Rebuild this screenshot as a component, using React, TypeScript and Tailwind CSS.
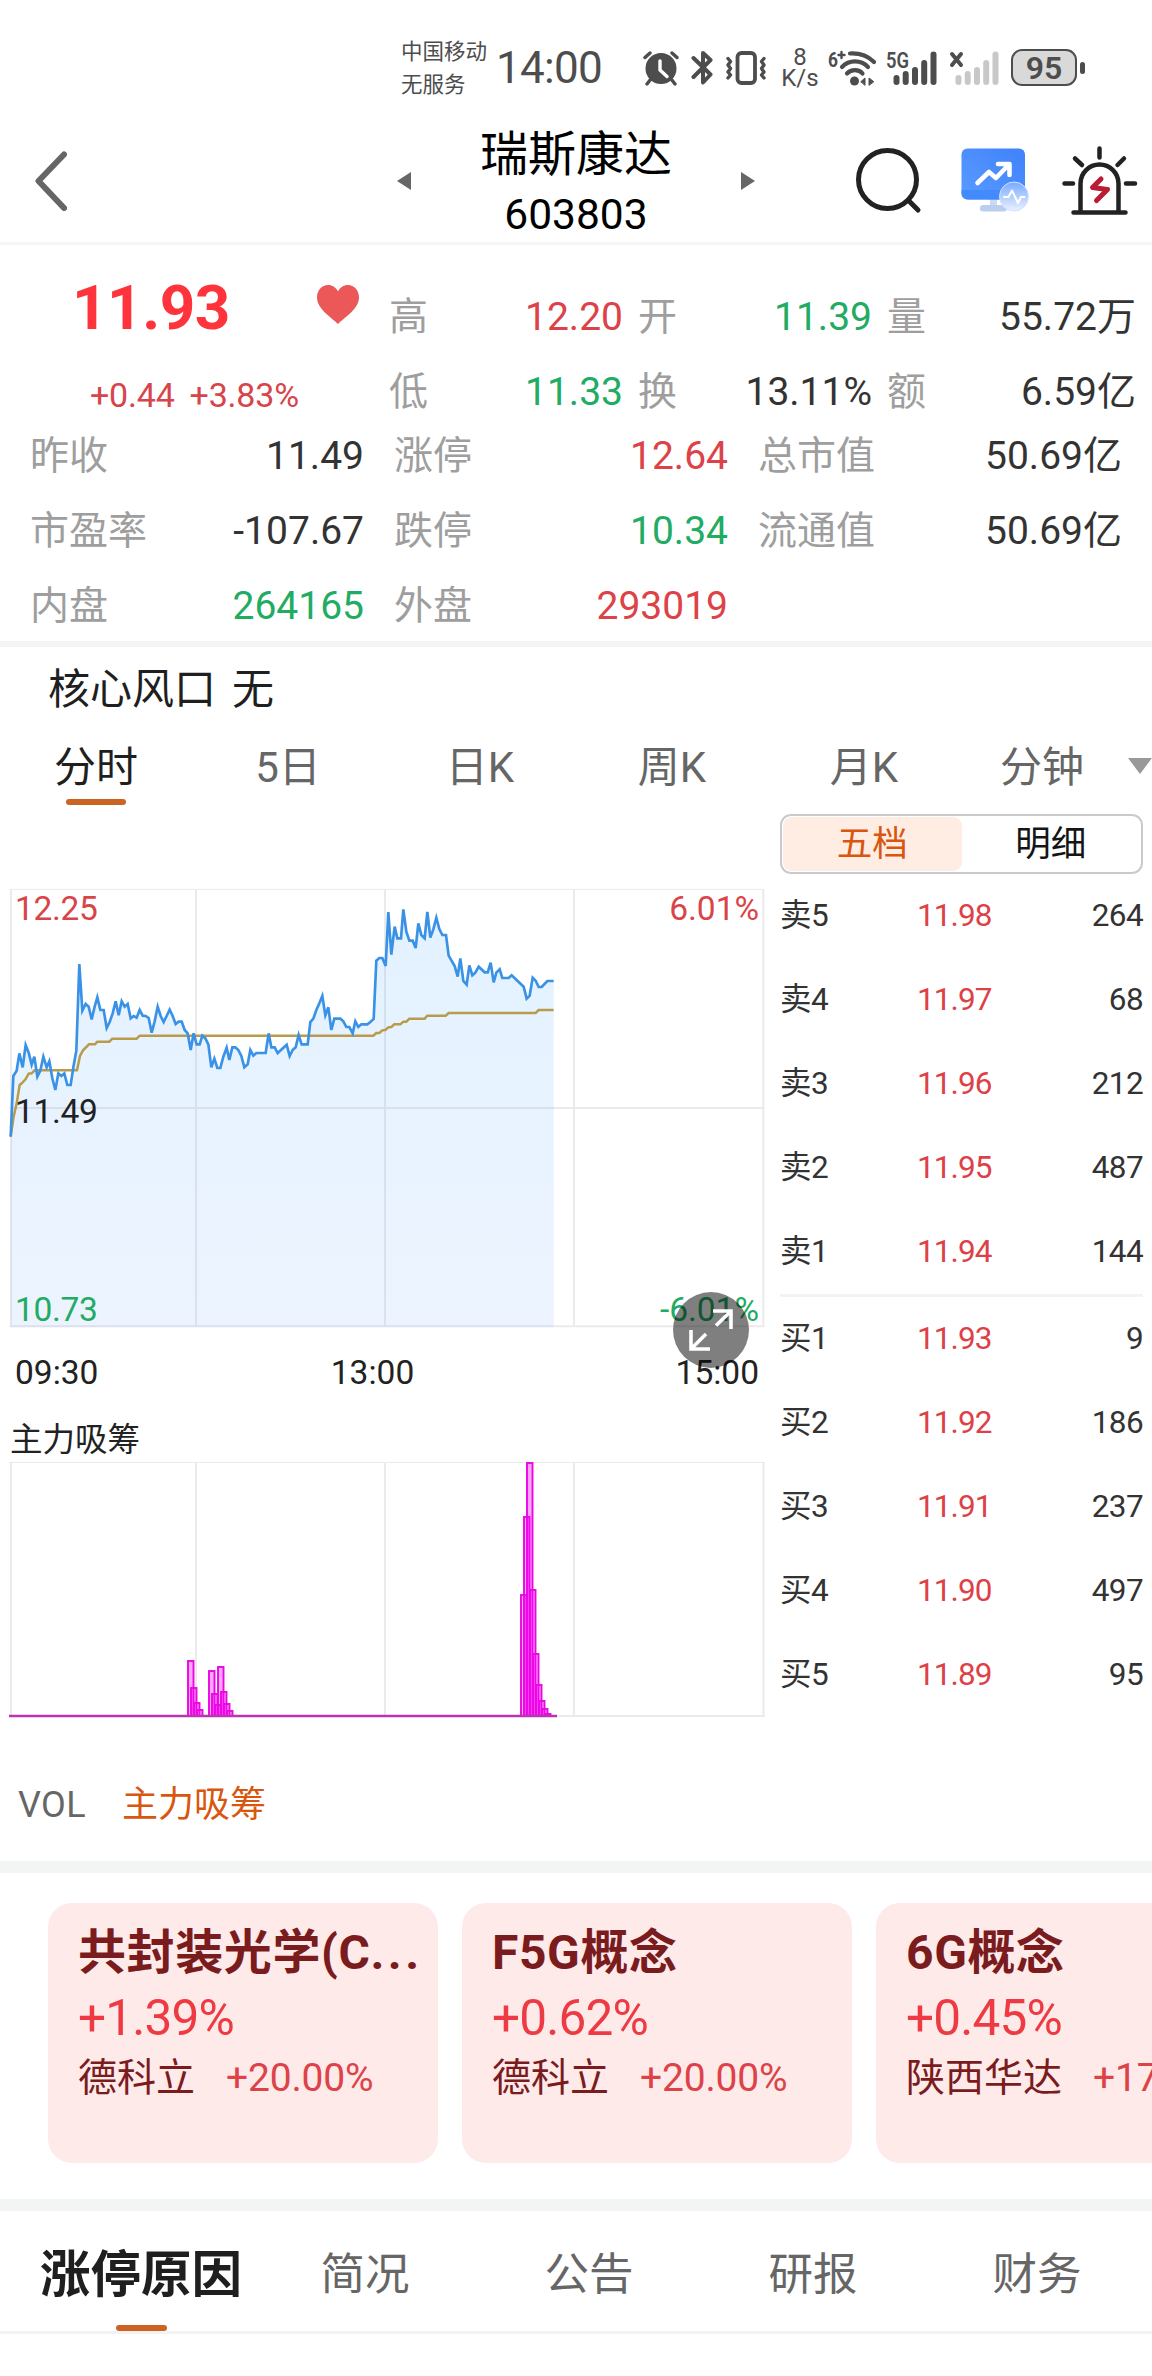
import clsx from "clsx"

type Tone = "up" | "down" | "flat"

interface Quote {
  label: string
  value: string
  tone: Tone
}

const toneClass: Record<Tone, string> = {
  up: "text-[#dc4248]",
  down: "text-[#22ab63]",
  flat: "text-[#333333]",
}

const topQuotes: Quote[] = [
  { label: "高", value: "12.20", tone: "up" },
  { label: "开", value: "11.39", tone: "down" },
  { label: "量", value: "55.72万", tone: "flat" },
  { label: "低", value: "11.33", tone: "down" },
  { label: "换", value: "13.11%", tone: "flat" },
  { label: "额", value: "6.59亿", tone: "flat" },
]

const moreQuotes: Quote[] = [
  { label: "昨收", value: "11.49", tone: "flat" },
  { label: "涨停", value: "12.64", tone: "up" },
  { label: "总市值", value: "50.69亿", tone: "flat" },
  { label: "市盈率", value: "-107.67", tone: "flat" },
  { label: "跌停", value: "10.34", tone: "down" },
  { label: "流通值", value: "50.69亿", tone: "flat" },
  { label: "内盘", value: "264165", tone: "down" },
  { label: "外盘", value: "293019", tone: "up" },
]

const periods = ["分时", "5日", "日K", "周K", "月K", "分钟"]

const asks = [
  ["卖5", "11.98", "264"],
  ["卖4", "11.97", "68"],
  ["卖3", "11.96", "212"],
  ["卖2", "11.95", "487"],
  ["卖1", "11.94", "144"],
]

const bids = [
  ["买1", "11.93", "9"],
  ["买2", "11.92", "186"],
  ["买3", "11.91", "237"],
  ["买4", "11.90", "497"],
  ["买5", "11.89", "95"],
]

const concepts = [
  { name: "共封装光学(C", clipped: true, change: "+1.39%", leader: "德科立", leaderChange: "+20.00%" },
  { name: "F5G概念", clipped: false, change: "+0.62%", leader: "德科立", leaderChange: "+20.00%" },
  { name: "6G概念", clipped: false, change: "+0.45%", leader: "陕西华达", leaderChange: "+17" },
]

const sections = ["涨停原因", "简况", "公告", "研报", "财务"]

// Chart series are kept in thirds of a pixel.
const priceLine =
  "32,830 40,648 50,632 58,580 68,622 77,555 86,578 95,614 103,590 112,650 121,632 130,590 140,622 148,604 157,655 166,690 175,640 184,648 193,640 202,675 212,675 220,622 229,572 238,312 247,452 257,432 266,440 275,478 284,440 292,412 301,450 311,450 320,504 329,486 338,460 347,424 356,466 365,424 374,440 383,432 392,475 401,468 410,473 419,450 428,467 437,468 446,474 455,518 464,484 473,440 482,468 491,486 500,468 509,449 518,468 527,492 536,485 545,485 554,510 563,520 572,570 581,520 590,553 599,553 607,527 616,535 625,553 634,622 643,596 652,624 661,624 670,590 680,563 688,600 697,562 706,562 715,570 724,588 733,622 743,613 751,570 760,587 769,579 797,579 806,520 814,562 824,562 833,579 860,554 869,588 878,570 887,562 896,525 905,553 923,553 931,486 940,476 949,450 958,430 967,408 976,466 985,442 994,510 1003,476 1021,476 1030,484 1039,501 1048,501 1058,520 1066,484 1075,501 1084,493 1102,493 1111,486 1121,477 1129,302 1138,294 1147,294 1157,318 1165,156 1174,284 1184,200 1192,235 1203,235 1210,148 1219,215 1228,242 1238,242 1247,264 1255,190 1264,225 1274,235 1282,156 1291,233 1300,208 1309,173 1318,207 1327,225 1338,225 1346,287 1364,318 1373,350 1381,295 1390,363 1400,374 1408,316 1417,346 1426,338 1436,320 1454,337 1463,337 1472,308 1481,367 1489,338 1499,328 1507,354 1526,354 1535,346 1553,363 1571,380 1580,416 1589,407 1598,353 1607,362 1616,381 1625,381 1642,363 1661,363"

const averageLine =
  "32,830 41,770 50,730 59,675 68,667 77,657 86,641 95,640 104,631 231,631 240,588 249,571 267,553 285,553 292,545 328,545 337,536 410,536 419,527 1120,527 1129,519 1138,519 1147,511 1156,510 1165,502 1174,501 1183,493 1201,493 1210,485 1219,485 1228,476 1274,476 1282,467 1337,467 1346,459 1607,459 1616,450 1661,450"

// [left, height] of each accumulation bar
const bars = [
  [188, 55], [191, 28], [194, 13], [197, 6],
  [209, 45], [212, 22], [215, 11], [218, 49], [221, 24], [224, 12], [227, 5],
  [521, 121], [524, 199], [527, 253], [530, 126], [533, 62], [536, 31], [539, 15], [542, 7], [545, 2],
]

function Signal({ className }: { className: string }) {
  return (
    <g className={className}>
      <rect x="0" y="24" width="6" height="10" rx="3" />
      <rect x="9.2" y="20" width="6" height="14" rx="3" />
      <rect x="18.5" y="16" width="6" height="18" rx="3" />
      <rect x="27.7" y="9" width="6" height="25" rx="3" />
      <rect x="37" y="0.5" width="6" height="33.5" rx="3" />
    </g>
  )
}

function StatusBar() {
  return (
    <div className="flex h-[120px] items-center pt-[15px] pl-[401px] text-[#4d4d4d]">
      <div className="w-[90px] text-[21.5px] leading-[33px] whitespace-nowrap">
        <div>中国移动</div>
        <div>无服务</div>
      </div>
      <div className="w-[152px] pl-[5px] text-[44px] leading-none tracking-[-0.7px]">14:00</div>
      {/* alarm */}
      <svg className="w-9 flex-none" height="36" viewBox="0 0 36 36" fill="none" stroke="currentColor">
        <circle cx="18" cy="18.5" r="15.5" fill="currentColor" stroke="none" />
        <path d="M2 7.5 7 3M34 7.5 29 3M7.5 29.5 4 34M28.5 29.5 32 34" strokeWidth="3.4" strokeLinecap="round" />
        <path d="M17 11v9l7 6.5" stroke="#fff" strokeWidth="3.4" strokeLinecap="round" strokeLinejoin="round" />
      </svg>
      {/* bluetooth */}
      <svg className="ml-3 w-[22px] flex-none" height="36" viewBox="0 0 22 36" fill="none" stroke="currentColor" strokeWidth="4" strokeLinecap="round" strokeLinejoin="round">
        <path d="M2.5 8 19.5 24.5 12 32.5V3L19.5 10 2.5 27" />
      </svg>
      {/* vibrate */}
      <svg className="ml-3 w-[42px] flex-none" height="36" viewBox="0 0 42 36" fill="none" stroke="currentColor" strokeLinecap="round" strokeLinejoin="round">
        <rect x="12.5" y="3" width="17.5" height="30" rx="4" strokeWidth="3.8" />
        <path d="M3 8.5 5.5 11.5 3 15 5.5 18.5 3 22 5.5 25 3 28M39 8.5 36.5 11.5 39 15 36.5 18.5 39 22 36.5 25 39 28" strokeWidth="3.4" />
      </svg>
      <div className="ml-[14px] w-[38px] text-center text-[24px] leading-[21px]">
        <div>8</div>
        <div>K/s</div>
      </div>
      {/* wifi 6+ */}
      <svg className="ml-[9px] w-[50px] flex-none overflow-visible" height="36" viewBox="0 0 50 36" fill="none" stroke="currentColor" strokeWidth="4.2" strokeLinecap="round">
        <text x="0" y="17" fontSize="21" fontWeight="700" fill="currentColor" stroke="none" textLength="10" lengthAdjust="spacingAndGlyphs">6</text>
        <path d="M10.5 5h6M13.5 2v6" strokeWidth="2.4" />
        <path d="M22 3.5C32 3 40 6 46 12M14 17C21 9.5 33 9.5 40 17M19 23.5C23 19 31 19 34.5 23.5" />
        <circle cx="26.5" cy="31" r="4.5" fill="currentColor" stroke="none" />
        <path d="M33 31.500 37 28v7zM41 35v-7l4.500 3.500z" fill="currentColor" strokeWidth="1" />
      </svg>
      {/* 5G signal */}
      <svg className="ml-2 w-[52px] flex-none overflow-visible" height="36" viewBox="0 0 52 36" fill="currentColor">
        <text x="0" y="17.5" fontSize="22" fontWeight="600" textLength="23" lengthAdjust="spacingAndGlyphs">5G</text>
        <g transform="translate(7.5 1)">
          <Signal className="fill-[#4d4d4d]" />
        </g>
      </svg>
      {/* second sim, no service */}
      <svg className="ml-[10px] w-[52px] flex-none" height="36" viewBox="0 0 52 36">
        <path d="M4 4l9 11M13 4 4 15" stroke="#4d4d4d" strokeWidth="4" strokeLinecap="round" />
        <g transform="translate(7.5 1)">
          <Signal className="fill-[#c8c8c8]" />
        </g>
      </svg>
      <div className="ml-[11px] flex items-center gap-[3px]">
        <div className="flex h-[37px] w-[66px] items-center justify-center rounded-[11px] border-[2.5px] border-[#4d4d4d] bg-[#d9d9d9] text-[32px] leading-none font-semibold">
          95
        </div>
        <div className="h-3 w-[5px] rounded-full bg-[#4d4d4d]" />
      </div>
    </div>
  )
}

function Header() {
  return (
    <header className="flex h-[125px] items-center border-b-[3px] border-[#f4f5f5] pl-[35px]">
      <svg className="w-8 flex-none" height="60" viewBox="0 0 32 60" fill="none" stroke="#666" strokeWidth="6" strokeLinecap="round" strokeLinejoin="round">
        <path d="M29 3.500 3.500 30 29 57" />
      </svg>
      <svg className="ml-[330px] w-[14px] flex-none" height="18" viewBox="0 0 14 18" fill="#666">
        <path d="M14 0v18L0 9z" />
      </svg>
      <div className="h-[122px] w-[330px] flex-none text-center text-black">
        <h1 className="h-16 text-[48px] leading-[69px]">瑞斯康达</h1>
        <div className="h-[58px] text-[42.5px] leading-[62px]">603803</div>
      </div>
      <svg className="w-[14px] flex-none" height="18" viewBox="0 0 14 18" fill="#666">
        <path d="M0 0v18l14-9z" />
      </svg>
      <svg className="ml-[101px] w-[66px] flex-none" height="66" viewBox="0 0 66 66" fill="none" stroke="#222" strokeWidth="5">
        <circle cx="31.5" cy="31.5" r="29" />
        <path d="M53 53l9 9" strokeLinecap="round" />
      </svg>
      <svg className="ml-[39px] w-[70px] flex-none" height="66" viewBox="0 0 70 66">
        <defs>
          <linearGradient id="screen" x1="0" y1="1" x2="1" y2="0">
            <stop offset="0" stopColor="#5a9bff" />
            <stop offset="1" stopColor="#3f82fb" />
          </linearGradient>
          <linearGradient id="badge" x1="0" y1="0" x2="0" y2="1">
            <stop offset="0" stopColor="#78aaff" />
            <stop offset="1" stopColor="#eaf2ff" />
          </linearGradient>
        </defs>
        <path d="M29 50h7v10h-7z" fill="#c9daf5" />
        <rect x="19" y="57" width="27" height="6.5" rx="3.200" fill="#bacfee" />
        <rect x="0.5" y="0.5" width="63.5" height="51" rx="6" fill="url(#screen)" />
        <path d="M0.500 42h63.500v3.500a6 6 0 0 1-6 6h-51.500a6 6 0 0 1-6-6z" fill="#438bfd" />
        <path d="M16.500 35 28 24l7 6L47.500 17M37 16h11.500v11" fill="none" stroke="#fff" strokeWidth="4.600" strokeLinecap="round" strokeLinejoin="round" />
        <circle cx="53" cy="48.5" r="14.5" fill="url(#badge)" stroke="#d2e2ff" strokeWidth="1" />
        <path d="M43 49h4.500l3.500-6.500 6 12.500 3-6h3.500" fill="none" stroke="#fff" strokeWidth="2" strokeLinecap="round" strokeLinejoin="round" />
      </svg>
      <svg className="ml-[31px] w-[76px] flex-none" height="72" viewBox="0 0 76 72" fill="none" stroke="#222" strokeWidth="4.5" strokeLinecap="round" strokeLinejoin="round">
        <path d="M11.500 67.500h52M18.500 67V38.500a19 19 0 0 1 38 0V67M37.500 3.500v9M13 13.500l7 6.500M62 13.500 55.500 20M2.500 38.500H11M64 38.500h9" />
        <path d="M39 34 30.500 42.500l15 2-11 11" stroke="#b91c34" strokeWidth="5" />
      </svg>
    </header>
  )
}

function QuotePanel() {
  return (
    <section className="h-[402px] border-b-[6px] border-[#f3f5f5] pt-[38px] text-[39px] leading-[64px]">
      <div className="flex h-[141px]">
        <div className="w-[389px] flex-none">
          <div className="flex h-[64px] pl-[72px]">
            <span className="w-[245px] text-[62px] leading-[50px] font-bold tracking-[-0.5px] text-[#ff333b]">
              11.93
            </span>
            <svg className="mt-[2px]" width="42" height="39" viewBox="0 0 42 39" fill="#ec5758">
              <path d="M21 39C14 32 0 24 0 12.500 0 5 5 0 11 0c4.500 0 8 2.500 10 6.500C23 2.500 26.500 0 31 0c6 0 11 5 11 12.500C42 24 28 32 21 39z" />
            </svg>
          </div>
          <div className="mt-[16px] pl-[90px] text-[34px] leading-[64px] tracking-[-0.2px] text-[#d6454b]">
            +0.44<span className="ml-[15px]">+3.83%</span>
          </div>
        </div>
        <dl className="grid flex-1 grid-cols-[249px_249px_1fr] content-start gap-y-[11px] pt-[2px]">
          {topQuotes.map((q, i) => (
            <div
              key={q.label}
              className={clsx("flex h-16 justify-between whitespace-nowrap", i % 3 === 2 ? "pr-[16px]" : "pr-[15px]")}
            >
              <dt className="text-[#9e9e9e]">{q.label}</dt>
              <dd className={toneClass[q.tone]}>{q.value}</dd>
            </div>
          ))}
        </dl>
      </div>
      <dl className="grid grid-cols-[364px_364px_1fr] gap-y-[11px] pl-[30px]">
        {moreQuotes.map((q) => (
          <div key={q.label} className="flex h-16 justify-between pr-[30px] whitespace-nowrap">
            <dt className="text-[#9e9e9e]">{q.label}</dt>
            <dd className={toneClass[q.tone]}>{q.value}</dd>
          </div>
        ))}
      </dl>
    </section>
  )
}

function PeriodTabs() {
  return (
    <nav className="grid h-[74px] grid-cols-6 text-[42px] leading-[64px] text-[#666]">
      {periods.map((p, i) => (
        <div
          key={p}
          className={clsx("flex flex-col items-center", i === 0 && "text-[#1f1f1f]", i === 5 && "relative pr-7")}
        >
          <span className="h-16 leading-[66px]">{p}</span>
          {i === 0 && <span className="h-[6px] w-[60px] rounded-full bg-[#cc6322]" />}
          {i === 5 && (
            <svg className="absolute top-[23px] right-0" width="24" height="16" viewBox="0 0 24 16" fill="#999">
              <path d="M0 0h24L12 16z" />
            </svg>
          )}
        </div>
      ))}
    </nav>
  )
}

function PriceChart() {
  return (
    <div className="relative h-[494px] text-[33.5px] leading-[40px]">
      <svg width="774" height="480" viewBox="0 0 2322 1440" fill="none">
        <defs>
          <linearGradient id="area" x1="0" y1="0" x2="0" y2="1">
            <stop offset="0" stopColor="#0089ff" stopOpacity="0.11" />
            <stop offset="1" stopColor="#2f7fff" stopOpacity="0.09" />
          </linearGradient>
        </defs>
        <path d="M28 88H2294" stroke="#ebebeb" strokeWidth="3" />
        <path d="M28 744H2294M28 1399H2294M33 88V1399M588 88V1399M1155 88V1399M1722 88V1399M2290 88V1399" stroke="#ebebeb" strokeWidth="6" />
        <polygon points={`${priceLine} 1661,1402 32,1402`} fill="url(#area)" />
        <polyline points={averageLine} stroke="#b89c4c" strokeWidth="7.5" />
        <polyline points={priceLine} stroke="#3a92e6" strokeWidth="8" />
      </svg>
      <span className="absolute top-[29px] left-[15px] tracking-[-0.3px] text-[#d94449]">12.25</span>
      <span className="absolute top-[29px] right-[15px] text-[#d94449]">6.01%</span>
      <span className="absolute top-[232px] left-[15px] tracking-[-0.3px] text-[#222]">11.49</span>
      <span className="absolute top-[430px] left-[15px] tracking-[-0.3px] text-[#22ab63]">10.73</span>
      <span className="absolute top-[430px] right-[15px] text-[#22ab63]">-6.01%</span>
      <button className="absolute top-[432px] left-[673px] size-[76px] rounded-full bg-black/50">
        <svg width="76" height="76" viewBox="0 0 76 76" fill="none" stroke="#fff" strokeWidth="3.6">
          <path d="M43 33.500 57 20M40 19h18v18M33 42 19 56M18 38v19h19" />
        </svg>
      </button>
    </div>
  )
}

function BarChart() {
  return (
    <svg className="mt-[3px]" width="774" height="262" viewBox="0 0 774 262" fill="none">
      <path d="M9 3.500H765" stroke="#ebebeb" />
      <path d="M9 257H765M11 3V257M196 3V257M385 3V257M574 3V257M763.500 3V257" stroke="#ebebeb" strokeWidth="2" />
      {bars.map(([x, h]) => (
        <rect key={x} x={x} y={257 - h} width="5.5" height={h} fill="#ff00ff" fillOpacity="0.35" stroke="#ea08e2" strokeWidth="1.9" />
      ))}
      <path d="M9 257H557" stroke="#ba35b0" strokeWidth="2.4" />
    </svg>
  )
}

function OrderRow({ row }: { row: string[] }) {
  return (
    <div className="grid h-[84px] grid-cols-[137px_1fr_1fr] items-center text-[31.5px] tracking-[-0.6px] text-[#333]">
      <span>{row[0]}</span>
      <span className="tracking-[-0.9px] text-[#dd4147]">{row[1]}</span>
      <span className="text-right">{row[2]}</span>
    </div>
  )
}

function OrderBook() {
  return (
    <aside className="w-[363px] pt-[5px]">
      <div className="grid h-[60px] grid-cols-2 rounded-[11px] border-2 border-[#c9cace] p-px text-center text-[35.5px] leading-[54px]">
        <div className="rounded-[9px] bg-[#ffece2] text-[#d9560f]">五档</div>
        <div className="text-[#151515]">明细</div>
      </div>
      <div className="h-[420px]">
        {asks.map((row) => (
          <OrderRow key={row[0]} row={row} />
        ))}
      </div>
      <div className="h-[3px] bg-[#f3f3f3]" />
      {bids.map((row) => (
        <OrderRow key={row[0]} row={row} />
      ))}
    </aside>
  )
}

function Concepts() {
  return (
    <section className="flex h-[350px] gap-6 overflow-hidden border-y-[12px] border-[#f3f5f5] pt-[30px] pl-12">
      {concepts.map((c) => (
        <div key={c.name} className="h-[260px] w-[390px] flex-none rounded-[24px] bg-[#ffeaea] pt-[18px] pl-[30px] whitespace-nowrap">
          <h2 className="text-[48px] leading-[64px] font-bold tracking-[0.6px] text-[#7a1c1e]">
            {c.name}
            {c.clipped && <span className="tracking-[3.5px]">...</span>}
          </h2>
          <div className="text-[49.5px] leading-[66px] tracking-[-0.8px] text-[#ee3b43]">{c.change}</div>
          <div className="flex gap-[31px] text-[39px] leading-[54px] text-[#7a1c1e]">
            {c.leader}
            <span className="tracking-[-0.2px] text-[#dd4249]">{c.leaderChange}</span>
          </div>
        </div>
      ))}
    </section>
  )
}

function SectionTabs() {
  return (
    <nav className="flex h-[123px] border-b-[3px] border-[#f3f3f3] pl-[29px] text-[44.5px] leading-[64px] text-[#666]">
      {sections.map((s, i) => (
        <div key={s} className={clsx("flex w-[224px] flex-none flex-col items-center pt-[32px]", i === 0 && "font-bold")}>
          <span className={clsx("whitespace-nowrap", i === 0 && "text-[50.5px] text-[#1f1f1f]")}>{s}</span>
          {i === 0 && <span className="mt-[18px] h-[6px] w-[51px] rounded-[3px] bg-[#cc6322]" />}
        </div>
      ))}
    </nav>
  )
}

export default function App() {
  return (
    <main className="h-[2376px] w-[1152px] overflow-hidden bg-white font-['Roboto','Noto_Sans_CJK_SC',sans-serif]">
      <StatusBar />
      <Header />
      <QuotePanel />
      <div className="flex h-[88px] items-center gap-[16px] pb-[3px] pl-12 text-[42px] text-[#1f1f1f]">
        <span>核心风口</span>
        <span>无</span>
      </div>
      <PeriodTabs />
      <div className="flex h-[1052px]">
        <div className="w-[780px] flex-none">
          <div className="h-[51px]" />
          <div className="w-[774px]">
            <PriceChart />
            <div className="flex h-[50px] justify-between pr-[15px] pl-[15px] text-[33.5px] leading-[38px] text-[#222]">
              <span>09:30</span>
              <span className="mr-[29px]">13:00</span>
              <span>15:00</span>
            </div>
            <div className="h-[52px] pl-[10px] text-[32.5px] leading-[73px] text-[#222]">主力吸筹</div>
          </div>
          <BarChart />
          <div className="flex gap-[36px] pt-[54px] pl-[18px] text-[36px] leading-[60px]">
            <span className="tracking-[0.4px] text-[#666]">VOL</span>
            <span className="text-[#d9560f]">主力吸筹</span>
          </div>
        </div>
        <OrderBook />
      </div>
      <Concepts />
      <SectionTabs />
    </main>
  )
}
